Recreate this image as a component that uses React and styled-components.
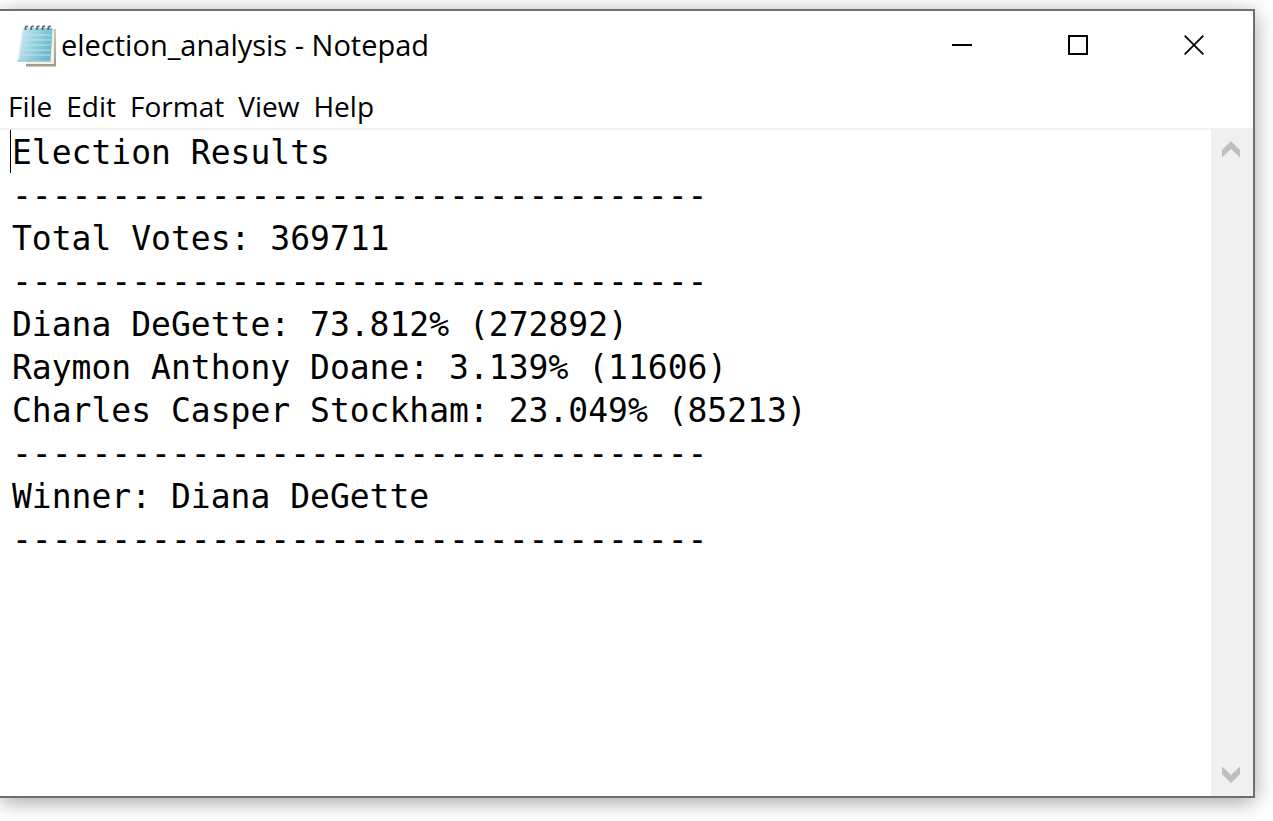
import React from "react";
import styled, { createGlobalStyle } from "styled-components";

const GlobalStyle = createGlobalStyle`
  * { box-sizing: border-box; }
  body {
    margin: 0;
    background: #ffffff;
    color: #000000;
    font-family: "Open Sans", "Noto Sans", sans-serif;
  }
  button {
    border: 0;
    padding: 0;
    background: transparent;
    color: inherit;
    font: inherit;
  }
  svg { display: block; }
`;

const Desktop = styled.main`
  display: flex;
  height: 100vh;
  padding: 9px 18px 23px 0;
  overflow: hidden;
`;

const Window = styled.section`
  flex: 1;
  min-width: 0;
  display: flex;
  flex-direction: column;
  background: #ffffff;
  border: 2px solid #6e6e6e;
  border-left: 0;
  box-shadow: 0 4px 20px rgba(0, 0, 0, 0.36);
`;

const TitleBar = styled.header`
  display: flex;
  align-items: center;
  height: 68px;
  padding: 0 1px 0 16px;
`;

const Title = styled.h1`
  flex: 1;
  margin: 0 0 0 3px;
  font-size: 29px;
  line-height: 40px;
  font-weight: 400;
  white-space: nowrap;
`;

const WindowButton = styled.button`
  display: flex;
  align-items: center;
  justify-content: center;
  width: 116px;
  height: 68px;
`;

const MenuBar = styled.nav`
  display: flex;
  align-items: center;
  gap: 14px;
  height: 49px;
  padding: 4px 8px 0;
`;

const MenuItem = styled.button`
  font-size: 28px;
  line-height: 40px;
`;

const Body = styled.div`
  flex: 1;
  min-height: 0;
  display: flex;
`;

const Editor = styled.div`
  position: relative;
  flex: 1;
  display: flex;
  border-top: 2px solid #f0f0f0;
`;

const TextArea = styled.textarea`
  flex: 1;
  border: 0;
  outline: 0;
  resize: none;
  padding: 1px 0 0 12px;
  background: #ffffff;
  color: #000000;
  font-family: "DejaVu Sans Mono", "Liberation Mono", monospace;
  font-size: 33px;
  line-height: 43px;
  white-space: pre;
  overflow: hidden;
`;

const Caret = styled.span`
  position: absolute;
  top: 0;
  left: 10px;
  width: 1px;
  height: 43px;
  background: #000000;
`;

const ScrollBar = styled.div`
  display: flex;
  flex-direction: column;
  justify-content: space-between;
  width: 42px;
  background: #f0f0f0;
`;

const ScrollButton = styled.button`
  display: flex;
  align-items: center;
  justify-content: center;
  width: 40px;
  height: 43px;
`;

const NotepadIcon = () => (
  <svg width="42" height="44" viewBox="0 0 42 44" aria-hidden="true">
    <defs>
      <linearGradient id="sheet" x1="0" y1="0" x2="1" y2="0.35">
        <stop offset="0" stopColor="#d6eef4" />
        <stop offset="0.4" stopColor="#a9d9e5" />
        <stop offset="1" stopColor="#6cb9cf" />
      </linearGradient>
      <linearGradient id="pages" x1="0" y1="0" x2="0" y2="1">
        <stop offset="0" stopColor="#cfc9b8" />
        <stop offset="1" stopColor="#a39a86" />
      </linearGradient>
    </defs>
    <path d="M10 6H40V43.5H10Z" fill="url(#pages)" />
    <path d="M10 6H38V41H10Z" fill="#f4f1e8" />
    <path d="M6.5 5H36.5L34.5 38.5H1.5Z" fill="url(#sheet)" />
    <path d="M7 12H35.5M6 17H35M5 22H35M4 27H34.5M3 32H34.5" stroke="#bfe4ec" strokeWidth="1" fill="none" />
    <path d="M2 38L7 5" stroke="#e4f4f8" strokeWidth="1.5" />
    <path d="M1.5 38H34.5" stroke="#8cc6d6" strokeWidth="1" />
    <g fill="none" stroke="#5b6a72" strokeWidth="1.8">
      <path d="M9.5 7V4.5Q9.5 3 12 3.5" />
      <path d="M15.2 7V4.5Q15.2 3 17.7 3.5" />
      <path d="M20.9 7V4.5Q20.9 3 23.4 3.5" />
      <path d="M26.6 7V4.5Q26.6 3 29.1 3.5" />
      <path d="M32.3 7V4.5Q32.3 3 34.8 3.5" />
    </g>
  </svg>
);

const MinimizeIcon = () => (
  <svg width="20" height="20" viewBox="0 0 20 20" aria-hidden="true">
    <path d="M0 9H20V11H0Z" />
  </svg>
);

const MaximizeIcon = () => (
  <svg width="20" height="20" viewBox="0 0 20 20" aria-hidden="true">
    <rect x="1" y="1" width="18" height="18" fill="none" stroke="#000" strokeWidth="2" />
  </svg>
);

const CloseIcon = () => (
  <svg width="20" height="20" viewBox="0 0 20 20" aria-hidden="true">
    <path d="M0.7 0.7L19.3 19.3M19.3 0.7L0.7 19.3" stroke="#000" strokeWidth="1.8" />
  </svg>
);

const UpIcon = () => (
  <svg width="18" height="17" viewBox="0 0 18 17" aria-hidden="true">
    <path d="M0 9L9 0L18 9V16.5L9 8L0 16.5Z" fill="#bfbfbf" />
  </svg>
);

const DownIcon = () => (
  <svg width="18" height="17" viewBox="0 0 18 17" aria-hidden="true">
    <path d="M0 8L9 17L18 8V0.5L9 9L0 0.5Z" fill="#bfbfbf" />
  </svg>
);

const rule = "-".repeat(35);

const text = [
  "Election Results",
  rule,
  "Total Votes: 369711",
  rule,
  "Diana DeGette: 73.812% (272892)",
  "Raymon Anthony Doane: 3.139% (11606)",
  "Charles Casper Stockham: 23.049% (85213)",
  rule,
  "Winner: Diana DeGette",
  rule,
].join("\n");

const menus = ["File", "Edit", "Format", "View", "Help"];

export default function App() {
  return (
    <>
      <GlobalStyle />
      <Desktop>
        <Window>
          <TitleBar>
            <NotepadIcon />
            <Title>election_analysis - Notepad</Title>
            <WindowButton type="button" aria-label="Minimize"><MinimizeIcon /></WindowButton>
            <WindowButton type="button" aria-label="Maximize"><MaximizeIcon /></WindowButton>
            <WindowButton type="button" aria-label="Close"><CloseIcon /></WindowButton>
          </TitleBar>
          <MenuBar>
            {menus.map((name) => (
              <MenuItem key={name} type="button">{name}</MenuItem>
            ))}
          </MenuBar>
          <Body>
            <Editor>
              <TextArea aria-label="Text editor" defaultValue={text} spellCheck={false} />
              <Caret />
            </Editor>
            <ScrollBar>
              <ScrollButton type="button" aria-label="Scroll up"><UpIcon /></ScrollButton>
              <ScrollButton type="button" aria-label="Scroll down"><DownIcon /></ScrollButton>
            </ScrollBar>
          </Body>
        </Window>
      </Desktop>
    </>
  );
}
